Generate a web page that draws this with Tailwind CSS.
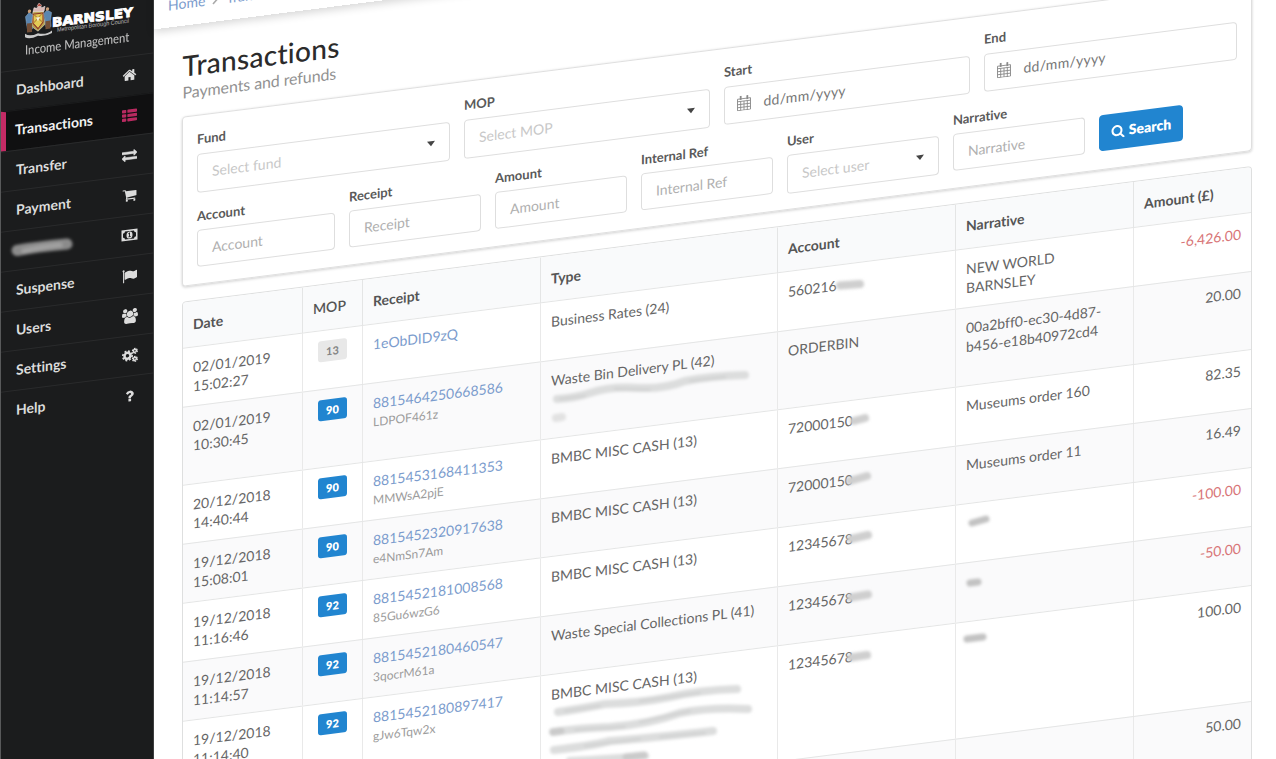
<!DOCTYPE html>
<html lang="en">
<head>
<meta charset="utf-8">
<title>Transactions - Income Management</title>
<script src="https://cdn.jsdelivr.net/npm/@tailwindcss/browser@4"></script>
</head>
<body class="relative h-[759px] w-[1276px] overflow-hidden bg-white font-[Lato,sans-serif] text-sm text-[#666] [font-variant-ligatures:none]">
<div class="flex h-[921px] origin-top-left -skew-y-[7.24deg] overflow-hidden">
  <!-- Sidebar -->
  <nav class="flex w-[154px] shrink-0 flex-col border-r border-l border-r-[#3c3d3e] border-l-[#58595a] bg-[#1b1c1d] font-bold text-[#dcdcdc]">
    <div class="flex h-[71.500px] shrink-0 flex-col">
      <svg class="h-[44px] w-[153px] shrink-0" viewBox="0 0 153 44">
        <g stroke-width=".5">
          <path d="M32 16q5-5 10 0l2 14-7 6-7-6z" fill="#b9a04c" stroke="#eee"/>
          <path d="M32 18.500h10v9l-5 6-5-6z" fill="#e3cc55" stroke="#8a2d26" stroke-width="1"/>
          <path d="M33 19l8 8M41 19l-8 8" stroke="#b98b3a" stroke-width="1.200"/>
          <path d="M35 22h4l-2 4z" fill="#f5f0dc"/>
          <path d="M32 16l1-4 3 1 2-4 3 4 3-1-1 5z" fill="#d9b9b5" stroke="#f3eded"/>
          <path d="M36 11l2-3 3 3" fill="#b3473c" stroke="#e8d8d8"/>
          <path d="M24.500 20l4-4 3 3-1 8 1 6h-5l-1-6z" fill="#5b86b0" stroke="#8fb0cd"/>
          <path d="M43 19l3-3 4.500 3-1 8 .5 6h-5l-1-8z" fill="#5b86b0" stroke="#8fb0cd"/>
          <circle cx="28.500" cy="15" r="1.700" fill="#c79c78"/><circle cx="46.500" cy="15" r="1.700" fill="#c79c78"/>
          <path d="M26 27h5v9h-5zM44.500 27h5v8h-5z" fill="#744f37"/>
          <path d="M24 37q5 4 13 1 8 3 14-1v2.500q-6 3-14 1-8 3-13 0z" fill="#c8c8c8"/>
        </g>
        <text x="51" y="33.500" textLength="81" lengthAdjust="spacingAndGlyphs" font-family="DejaVu Sans" font-weight="bold" font-size="12.500" fill="#fff" stroke="#fff" stroke-width=".9">BARNSLEY</text>
        <text x="56" y="39" textLength="72" lengthAdjust="spacingAndGlyphs" font-family="Liberation Sans" font-weight="normal" font-size="6" fill="#bbb">Metropolitan Borough Council</text>
      </svg>
      <div class="ml-[24px] origin-left scale-x-[0.865] text-[13px] leading-[18px] font-medium whitespace-nowrap text-[#bdbdbd]">Income Management</div>
    </div>
    <a class="flex h-[40.1px] shrink-0 items-center justify-between border-t border-[#2a2b2c] pr-4 pb-px pl-[15px]">Dashboard
      <svg class="h-[15px] w-[15px]" viewBox="0 0 1792 1792" fill="currentColor"><path d="M1472 992v480q0 26-19 45t-45 19h-384v-384h-256v384h-384q-26 0-45-19t-19-45v-480q0-1 .5-3t.5-3l575-474 575 474q1 2 1 6zm223-69l-62 74q-8 9-21 11h-3q-13 0-21-7l-692-577-692 577q-12 8-24 7-13-2-21-11l-62-74q-8-10-7-23.500t11-21.500l719-599q32-26 76-26t76 26l244 204v-195q0-14 9-23t23-9h192q14 0 23 9t9 23v408l219 182q10 8 11 21.500t-7 23.500z"/></svg></a>
    <a class="flex h-[40.1px] shrink-0 items-center justify-between border-t border-t-[#1b1c1d] border-l-5 border-l-[#c42b65] bg-[#101011] pr-4 pb-px pl-[9px] text-[#f2f2f2]">Transactions
      <svg class="h-[15px] w-[15px] text-[#b92a60]" viewBox="0 0 1792 1792" fill="currentColor"><rect y="224" width="512" height="384" rx="90"/><rect y="736" width="512" height="384" rx="90"/><rect y="1248" width="512" height="384" rx="90"/><rect x="640" y="224" width="1152" height="384" rx="90"/><rect x="640" y="736" width="1152" height="384" rx="90"/><rect x="640" y="1248" width="1152" height="384" rx="90"/></svg></a>
    <a class="flex h-[40.1px] shrink-0 items-center justify-between border-t border-[#2a2b2c] pr-4 pb-px pl-[15px]">Transfer
      <svg class="h-[15px] w-[15px]" viewBox="0 0 1792 1792" fill="currentColor" stroke="currentColor" stroke-width="60"><path d="M1792 1184v192q0 13-9.500 22.500t-22.500 9.500h-1376v192q0 13-9.500 22.500t-22.500 9.500q-12 0-24-10l-319-320q-9-9-9-22 0-14 9-23l320-320q9-9 23-9 13 0 22.500 9.500t9.500 22.500v192h1376q13 0 22.500 9.500t9.500 22.500zm0-544q0 14-9 23l-320 320q-9 9-23 9-13 0-22.500-9.500t-9.500-22.500v-192h-1376q-13 0-22.500-9.500t-9.500-22.500v-192q0-13 9.500-22.500t22.500-9.500h1376v-192q0-14 9-23t23-9q12 0 24 10l319 319q9 9 9 23z"/></svg></a>
    <a class="flex h-[40.1px] shrink-0 items-center justify-between border-t border-[#2a2b2c] pr-4 pb-px pl-[15px]">Payment
      <svg class="h-[15px] w-[15px]" viewBox="0 0 1792 1792" fill="currentColor"><path d="M704 1536q0 52-38 90t-90 38-90-38-38-90 38-90 90-38 90 38 38 90zm896 0q0 52-38 90t-90 38-90-38-38-90 38-90 90-38 90 38 38 90zm128-1088v512q0 24-16.500 42.500t-40.500 21.500l-1044 122q13 60 13 70 0 16-24 64h920q26 0 45 19t19 45-19 45-45 19h-1024q-26 0-45-19t-19-45q0-11 8-31.500t16-36 21.500-40 15.500-29.500l-177-823h-204q-26 0-45-19t-19-45 19-45 45-19h256q16 0 28.500 6.500t19.500 15.500 13 24.500 8 26 5.500 29.500 4.500 26h1201q26 0 45 19t19 45z"/></svg></a>
    <a class="flex h-[40.1px] shrink-0 items-center justify-end border-t border-[#2a2b2c] pr-[15px] pb-px">
      <svg class="h-[15px] w-[17px]" viewBox="0 0 17 15" fill="currentColor"><path fill-rule="evenodd" d="M.5 2h16v11H.5zM4 3.500Q4 5.500 2 5.500v4q2 0 2 2h9q0-2 2-2v-4q-2 0-2-2z"/><path fill-rule="evenodd" d="M8.500 4q3 0 3 3.500t-3 3.500-3-3.500 3-3.500zm-1.200 1.900.3.800.5-.2v2.300h-.8v.8h2.500v-.8H9V5h-.7z"/></svg></a>
    <a class="flex h-[40.1px] shrink-0 items-center justify-between border-t border-[#2a2b2c] pr-4 pb-px pl-[15px]">Suspense
      <svg class="h-[15px] w-[15px]" viewBox="0 0 1792 1792" fill="currentColor"><path d="M320 256q0 72-64 110v1266q0 13-9.500 22.500t-22.500 9.500h-64q-13 0-22.500-9.500t-9.500-22.500v-1266q-64-38-64-110 0-53 37.500-90.500t90.500-37.500 90.500 37.500 37.500 90.500zm1472 64v763q0 25-12.500 38.500t-39.500 27.500q-215 116-369 116-61 0-123.500-22t-108.500-48-115.500-48-142.500-22q-192 0-464 146-17 9-33 9-26 0-45-19t-19-45v-742q0-32 31-55 21-14 79-43 236-120 421-120 107 0 200 29t219 88q38 19 88 19 54 0 117.500-21t110-47 88-47 54.500-21q26 0 45 19t19 45z"/></svg></a>
    <a class="flex h-[40.1px] shrink-0 items-center justify-between border-t border-[#2a2b2c] pr-[15px] pb-px pl-[15px]">Users
      <svg class="h-[15px] w-[16px]" viewBox="0 0 1920 1792" fill="currentColor"><path d="M593 896q-162 5-265 128h-134q-82 0-138-40.500t-56-118.500q0-353 124-353 6 0 43.500 21t97.500 42.500 119 21.500q67 0 133-23-5 37-5 66 0 139 81 256zm1071 637q0 120-73 189.500t-194 69.500h-874q-121 0-194-69.500t-73-189.500q0-53 3.500-103.500t14-109 26.500-108.500 43-97.500 62-81 85.500-53.500 111.500-20q10 0 43 21.500t73 48 107 48 135 21.500 135-21.500 107-48 73-48 43-21.500q61 0 111.500 20t85.500 53.500 62 81 43 97.500 26.500 108.500 14 109 3.500 103.500zm-1024-1277q0 106-75 181t-181 75-181-75-75-181 75-181 181-75 181 75 75 181zm704 384q0 159-112.500 271.500t-271.500 112.500-271.500-112.500-112.500-271.500 112.500-271.500 271.500-112.500 271.500 112.500 112.500 271.500zm576 225q0 78-56 118.500t-138 40.500h-134q-103-123-265-128 81-117 81-256 0-29-5-66 66 23 133 23 59 0 119-21.500t97.500-42.500 43.500-21q124 0 124 353zm-128-609q0 106-75 181t-181 75-181-75-75-181 75-181 181-75 181 75 75 181z"/></svg></a>
    <a class="flex h-[40.1px] shrink-0 items-center justify-between border-t border-[#2a2b2c] pr-[15px] pb-px pl-[15px]">Settings
      <svg class="h-[16px] w-[16px]" viewBox="0 0 16 16" fill="none" stroke="currentColor"><circle cx="5.500" cy="8" r="3" stroke-width="2.500"/><circle cx="5.500" cy="8" r="4.700" stroke-width="1.700" stroke-dasharray="1.950 1.741"/><circle cx="12.900" cy="4" r="1.500" stroke-width="1.500"/><circle cx="12.900" cy="4" r="2.500" stroke-width="1.200" stroke-dasharray="1.500 1.118"/><circle cx="12.900" cy="12" r="1.500" stroke-width="1.500"/><circle cx="12.900" cy="12" r="2.500" stroke-width="1.200" stroke-dasharray="1.500 1.118"/></svg></a>
    <a class="flex h-[40.1px] shrink-0 items-center justify-between border-t border-[#2a2b2c] pr-4 pb-px pl-[15px]">Help
      <svg class="h-[15px] w-[15px]" viewBox="0 0 1792 1792" fill="currentColor"><path d="M1088 1256v240q0 16-12 28t-28 12h-240q-16 0-28-12t-12-28v-240q0-16 12-28t28-12h240q16 0 28 12t12 28zm316-600q0 54-15.500 101t-35 76.500-55 59.500-57.500 43.500-61 35.500q-41 23-68.500 65t-27.500 67q0 17-12 32.500t-28 15.500h-240q-15 0-25.500-18.500t-10.500-37.500v-45q0-83 65-156.500t143-108.500q59-27 84-56t25-76q0-42-46.500-74t-107.500-32q-65 0-108 29-35 25-107 115-13 16-31 16-12 0-25-8l-164-125q-13-10-15.500-25t5.500-28q160-266 464-266 80 0 161 31t146 83 106 127.500 41 158.500z"/></svg></a>
  </nav>

  <main class="flex w-[1122px] shrink-0 flex-col">
    <div class="flex h-[48.500px] shrink-0 items-center gap-[7px] pt-[6px] pl-[14px] text-[#7b9ccd] shadow-[0_3px_9px_rgba(0,0,0,0.16)]">
      <span>Home</span>
      <svg class="h-[10px] w-[7px]" viewBox="0 0 7 10" fill="none" stroke="#aaa" stroke-width="1.700"><path d="M1 1l4 4-4 4"/></svg>
      <span>Transactions</span>
    </div>
    <header class="mt-[24.500px] ml-[28.500px] flex h-[67px] shrink-0 flex-col">
      <h1 class="text-[28px] leading-[32px] font-medium tracking-[0.300px] text-[#2b2b2b]">Transactions</h1>
      <p class="mt-[0.500px] text-base leading-[20px] tracking-[-0.100px] text-[#929292]">Payments and refunds</p>
    </header>

    <!-- Filters -->
    <form class="ml-[28px] flex h-[169.500px] w-[1070px] shrink-0 flex-col rounded border border-[#dfdfdf] px-[14px] pt-[14px] shadow-[0_1px_3px_rgba(0,0,0,0.2)]">
      <div class="flex h-[77px] gap-[14.500px] text-[#c8c8c8]">
        <label class="w-[252.500px]"><span class="block h-[23.500px] text-[13px] leading-[18px] font-bold text-[#5a5a5a]">Fund</span>
          <span class="flex h-[39px] items-center justify-between rounded border border-[#dedede] pr-[14px] pl-[14px]">Select fund <i class="border-x-4 border-t-5 border-x-transparent border-t-[#444]"></i></span></label>
        <label class="w-[245.500px]"><span class="block h-[23.500px] text-[13px] leading-[18px] font-bold text-[#5a5a5a]">MOP</span>
          <span class="flex h-[39px] items-center justify-between rounded border border-[#dedede] pr-[14px] pl-[14px]">Select MOP <i class="border-x-4 border-t-5 border-x-transparent border-t-[#444]"></i></span></label>
        <label class="w-[245.500px]"><span class="block h-[23.500px] text-[13px] leading-[18px] font-bold text-[#5a5a5a]">Start</span>
          <span class="flex h-[38px] items-center gap-[12.500px] rounded border border-[#dedede] pl-[12px] tracking-[0.250px] text-[#777]"><svg class="h-[15px] w-[14px]" viewBox="0 0 14 15" fill="none" stroke="#8a8a8a" stroke-width=".9"><path d="M.5 3h13v11.500H.5zM.5 5.500h13M.5 8.500h13M.5 11.500h13M3.700 5.500v9M7 5.500v9M10.300 5.500v9"/><path d="M3.700 0v4M10.300 0v4" stroke-width="1.800"/></svg>dd/mm/yyyy</span></label>
        <label class="w-[252.500px]"><span class="block h-[23.500px] text-[13px] leading-[18px] font-bold text-[#5a5a5a]">End</span>
          <span class="flex h-[38px] items-center gap-[12.500px] rounded border border-[#dedede] pl-[12px] tracking-[0.250px] text-[#777]"><svg class="h-[15px] w-[14px]" viewBox="0 0 14 15" fill="none" stroke="#8a8a8a" stroke-width=".9"><path d="M.5 3h13v11.500H.5zM.5 5.500h13M.5 8.500h13M.5 11.500h13M3.700 5.500v9M7 5.500v9M10.300 5.500v9"/><path d="M3.700 0v4M10.300 0v4" stroke-width="1.800"/></svg>dd/mm/yyyy</span></label>
      </div>
      <div class="flex gap-[14.300px] text-[#b0b0b0]">
        <label class="w-[137.700px]"><span class="block h-[23px] text-[13px] leading-[18px] font-bold text-[#5a5a5a]">Account</span>
          <span class="flex h-[37px] items-center rounded border border-[#dedede] pl-[14px]">Account</span></label>
        <label class="w-[131.700px]"><span class="block h-[23px] text-[13px] leading-[18px] font-bold text-[#5a5a5a]">Receipt</span>
          <span class="flex h-[37px] items-center rounded border border-[#dedede] pl-[14px]">Receipt</span></label>
        <label class="w-[131.700px]"><span class="block h-[23px] text-[13px] leading-[18px] font-bold text-[#5a5a5a]">Amount</span>
          <span class="flex h-[37px] items-center rounded border border-[#dedede] pl-[14px]">Amount</span></label>
        <label class="w-[131.700px]"><span class="block h-[23px] text-[13px] leading-[18px] font-bold text-[#5a5a5a]">Internal Ref</span>
          <span class="flex h-[37px] items-center rounded border border-[#dedede] pl-[14px]">Internal Ref</span></label>
        <label class="w-[151.700px]"><span class="block h-[23px] text-[13px] leading-[18px] font-bold text-[#5a5a5a]">User</span>
          <span class="flex h-[39px] items-center justify-between rounded border border-[#dedede] pr-[14px] pl-[14px] text-[#c8c8c8]">Select user <i class="border-x-4 border-t-5 border-x-transparent border-t-[#444]"></i></span></label>
        <label class="w-[131.700px]"><span class="block h-[23px] text-[13px] leading-[18px] font-bold text-[#5a5a5a]">Narrative</span>
          <span class="flex h-[37px] items-center rounded border border-[#dedede] pl-[14px]">Narrative</span></label>
        <button type="button" class="mt-[23px] flex h-[36px] w-[84px] items-center justify-center gap-[4px] rounded bg-[#2185d0] font-extrabold text-white"><svg class="h-[14px] w-[14px]" viewBox="0 0 1792 1792" fill="currentColor"><path d="M1216 832q0-185-131.500-316.500t-316.500-131.500-316.500 131.500-131.500 316.500 131.500 316.500 316.500 131.500 316.500-131.500 131.500-316.500zm512 832q0 52-38 90t-90 38q-54 0-90-38l-343-342q-179 124-399 124-143 0-273.500-55.500t-225-150-150-225-55.500-273.500 55.500-273.500 150-225 225-150 273.500-55.500 273.500 55.500 225 150 150 225 55.500 273.500q0 220-124 399l343 343q37 37 37 90z"/></svg>Search</button>
      </div>
    </form>

    <!-- Results -->
    <section class="mt-[15px] ml-[28px] w-[1070px] shrink-0 overflow-hidden rounded border border-[#dedfdf]">
      <div class="grid h-[45px] grid-cols-[120px_60px_178px_237px_178px_178px_117px] divide-x divide-[#e4e5e5] bg-[#f9fafb] leading-[46px] font-bold text-[#555]">
        <div class="pl-[10px]">Date</div><div class="pl-[10px] font-semibold">MOP</div><div class="pl-[10px]">Receipt</div><div class="pl-[10px]">Type</div><div class="pl-[10px]">Account</div><div class="pl-[10px]">Narrative</div><div class="pl-[10px]">Amount (£)</div>
      </div>
      <div id="rows"></div>
    </section>
  </main>
</div>

<!-- Redaction smears -->
<svg class="pointer-events-none absolute inset-0 h-[759px] w-[1276px]" viewBox="0 0 1276 759" fill="none" stroke-linecap="round">
  <defs><filter id="s" x="-20%" y="-80%" width="140%" height="260%"><feGaussianBlur stdDeviation="1.500"/></filter></defs>
  <g filter="url(#s)">
    <path d="M17 250.500Q35 247 67 244" stroke="#8b8b8b" stroke-width="11"/>
    <path d="M24 251Q40 247 60 245" stroke="#a0a0a0" stroke-width="5"/>
    <g stroke="#dcdddd" stroke-width="8">
      <path d="M557 399Q575 398 590 393Q610 386 640 388Q665 389 685 381Q710 376 745 375"/>
      <path d="M556 418l6-1" stroke="#e2e2e2"/>
      <path d="M558 712Q580 709 605 704Q640 703 670 697Q700 690 737 689"/>
      <path d="M553 732Q580 728 610 727Q650 724 680 713Q710 707 748 709"/>
      <path d="M554 750Q590 746 610 741Q650 738 713 731"/>
      <path d="M570 761Q610 759 645 756"/>
    </g>
    <g stroke="#cfd0d0" stroke-width="2">
      <path d="M560 399L585 396M615 389L650 390M690 381L725 377M565 711L600 706M640 701L700 693M575 730L625 727M640 722L690 711M585 746L640 739M660 737L705 733"/>
    </g>
    <path d="M553 732l8-1M626 757l18-2" stroke="#cacaca" stroke-width="7"/>
    <g stroke="#cfcfcf" stroke-width="8">
      <path d="M840 285.500l20-1.500M854 421l11-3M850 481l17-5M851 539l17-4M851 597.500l17-3M851 657.500l16-2.500"/>
    </g>
    <path d="M972 523l14-4M970 583l8-1M967 639l16-2" stroke="#c2c2c2" stroke-width="7"/>
  </g>
</svg>
<script>
const data = [
  ["02/01/2019<br>15:02:27", "13", "1eObDID9zQ", "", "Business Rates (24)", "560216", "NEW WORLD<br>BARNSLEY", "-6,426.00", 59],
  ["02/01/2019<br>10:30:45", "90", "8815464250668586", "LDPOF461z", "Waste Bin Delivery PL (42)", "ORDERBIN", "00a2bff0-ec30-4d87-<br>b456-e18b40972cd4", "20.00", 78],
  ["20/12/2018<br>14:40:44", "90", "8815453168411353", "MMWsA2pjE", "BMBC MISC CASH (13)", "72000150", "Museums order 160", "82.35", 59],
  ["19/12/2018<br>15:08:01", "90", "8815452320917638", "e4NmSn7Am", "BMBC MISC CASH (13)", "72000150", "Museums order 11", "16.49", 59],
  ["19/12/2018<br>11:16:46", "92", "8815452181008568", "85Gu6wzG6", "BMBC MISC CASH (13)", "12345678", "", "-100.00", 59],
  ["19/12/2018<br>11:14:57", "92", "8815452180460547", "3qocrM61a", "Waste Special Collections PL (41)", "12345678", "", "-50.00", 59],
  ["19/12/2018<br>11:14:40", "92", "8815452180897417", "gJw6Tqw2x", "BMBC MISC CASH (13)", "12345678", "", "100.00", 116],
  ["", "", "", "", "", "", "", "50.00", 78]
];
document.getElementById("rows").innerHTML = data.map((r, i) => `
<div class="grid grid-cols-[120px_60px_178px_237px_178px_178px_117px] divide-x divide-[#e9e9e9] border-t border-[#e4e5e5] leading-[19px] ${i % 2 ? "bg-[#fafafb]" : "bg-white"}" style="height:${r[8]}px">
  <div class="pt-[10px] pl-[10px]">${r[0]}</div>
  <div class="flex justify-center pt-[10px]">${r[1] ? `<span class="h-[21px] w-[29px] rounded-[3px] text-center text-[11px] leading-[21px] ${r[1] === "13" ? "bg-[#e8e8e8] font-bold text-[#858585]" : "bg-[#2185d0] font-extrabold text-white"}">${r[1]}</span>` : ""}</div>
  <div class="pt-[10px] pl-[10px] text-[#7b9ccd]">${r[2]}<div class="text-xs leading-[19px] text-[#9c9c9c]">${r[3]}</div></div>
  <div class="pt-[10px] pl-[10px]">${r[4]}</div>
  <div class="pt-[10px] pl-[10px]">${r[5]}</div>
  <div class="pt-[10px] pl-[10px]">${r[6]}</div>
  <div class="pt-[10px] pr-[10px] text-right ${r[7][0] === "-" ? "text-[#d87577]" : ""}">${r[7]}</div>
</div>`).join("");
</script>
</body>
</html>
